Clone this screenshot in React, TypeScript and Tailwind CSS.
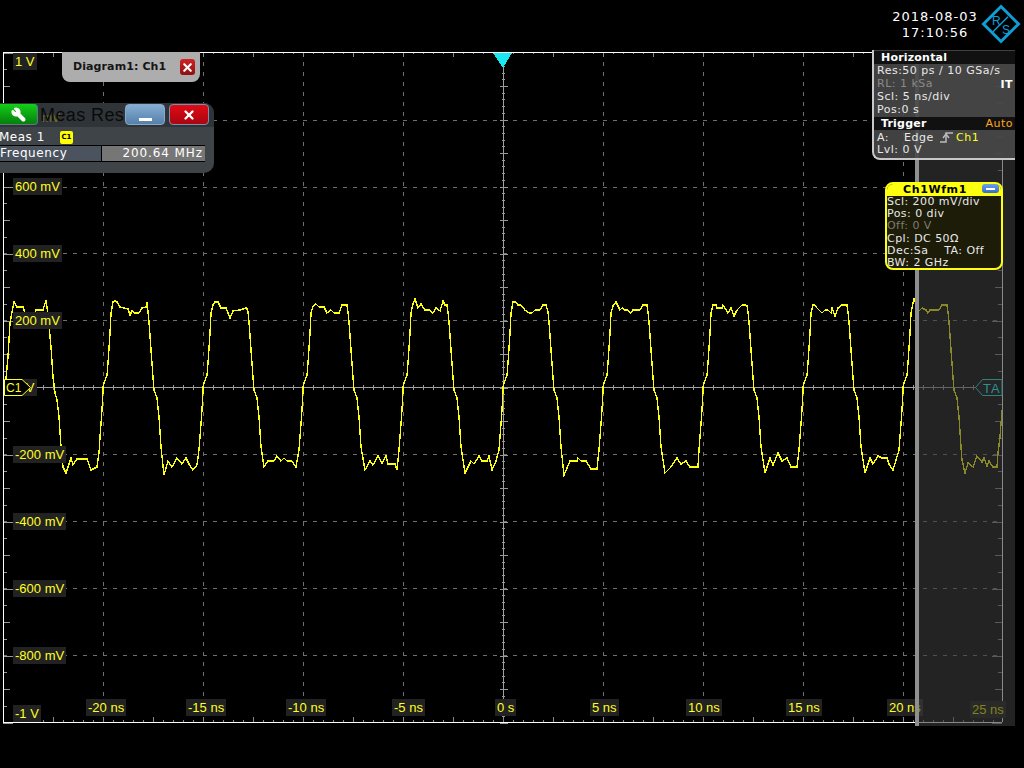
import React from 'react';
import { X, Wrench } from 'lucide-react';

const axisFont = { fontFamily: '"Liberation Sans", Arial, sans-serif' };

const divX = [103.5, 203.5, 303.5, 403.5, 503.5, 603.5, 703.5, 803.5, 903.5];
const divY = [120.5, 187.5, 253.5, 320.5, 454.5, 521.5, 588.5, 655.5];

const yLabels = [
    { text: '600 mV', top: 128 },
    { text: '400 mV', top: 195 },
    { text: '200 mV', top: 262 },
    { text: '0 V', top: 329 },
    { text: '-200 mV', top: 396 },
    { text: '-400 mV', top: 463 },
    { text: '-600 mV', top: 530 },
    { text: '-800 mV', top: 597 },
];

const xLabels = [
    { text: '-20 ns', left: 86 },
    { text: '-15 ns', left: 186 },
    { text: '-10 ns', left: 286 },
    { text: '-5 ns', left: 392 },
    { text: '0 s', left: 495 },
    { text: '5 ns', left: 590 },
    { text: '10 ns', left: 686 },
    { text: '15 ns', left: 786 },
    { text: '20 ns', left: 887 },
];

// one period of the trace, dx from the rising zero crossing, y in page px
const riseEdge = [[0, 387], [1, 383], [4, 375], [5, 363], [7, 333], [8, 313]];
const fallEdge = [[45, 312], [46, 322], [48, 350], [50, 377], [51, 390], [54, 398], [56, 417], [58, 447]];
const backEdge = [[97, 437], [99, 410], [100, 390]];

const tops = [
    [[10, 302], [12, 301], [14, 302], [17, 307], [21, 308], [25, 309], [27, 315], [29, 311], [32, 313], [36, 313], [39, 308], [43, 307], [44, 302]],
    [[10, 305], [12, 302], [15, 302], [18, 308], [23, 308], [27, 318], [30, 311], [37, 310], [43, 308], [44, 309]],
    [[10, 306], [11, 305], [13, 304], [16, 307], [21, 307], [24, 313], [28, 310], [31, 313], [36, 313], [39, 305], [44, 305]],
    [[10, 304], [12, 299], [15, 308], [18, 304], [22, 310], [27, 310], [30, 313], [33, 308], [37, 311], [40, 301], [42, 305], [44, 305]],
    [[10, 302], [13, 302], [15, 305], [18, 305], [22, 310], [26, 313], [29, 313], [32, 310], [37, 310], [40, 305], [43, 305]],
    [[10, 306], [13, 302], [17, 310], [19, 308], [22, 310], [25, 310], [28, 313], [30, 310], [37, 310], [40, 305], [44, 305]],
    [[10, 305], [13, 305], [14, 308], [19, 308], [20, 305], [25, 313], [28, 308], [31, 316], [34, 310], [39, 305], [42, 305], [44, 306]],
    [[10, 305], [12, 305], [14, 308], [19, 313], [22, 310], [25, 310], [28, 313], [29, 308], [32, 316], [35, 308], [39, 305], [44, 305]],
    [[10, 303], [11, 299], [14, 307], [16, 311], [19, 308], [23, 310], [25, 313], [27, 310], [36, 310], [39, 305], [44, 305]],
];

const bottoms = [
    [[61, 475], [65, 461], [69, 467], [74, 458], [79, 464], [83, 458], [86, 464], [90, 470], [94, 465], [96, 450]],
    [[61, 467], [65, 461], [71, 461], [74, 456], [78, 461], [81, 458], [84, 461], [89, 461], [93, 467], [96, 450]],
    [[62, 470], [67, 461], [70, 465], [75, 456], [79, 463], [83, 456], [85, 464], [92, 464], [94, 470], [96, 450]],
    [[62, 473], [68, 461], [71, 464], [76, 456], [79, 461], [84, 461], [86, 456], [89, 470], [93, 461], [96, 450]],
    [[61, 475], [67, 461], [74, 461], [75, 458], [78, 461], [83, 461], [88, 469], [94, 469], [96, 450]],
    [[62, 473], [68, 467], [74, 458], [78, 464], [83, 461], [87, 467], [95, 467], [96, 450]],
    [[62, 473], [67, 458], [70, 465], [75, 453], [79, 461], [84, 458], [88, 467], [94, 467], [96, 450]],
    [[62, 473], [67, 458], [70, 464], [75, 456], [79, 458], [84, 458], [86, 464], [90, 470], [96, 450]],
    [[59, 460], [62, 473], [65, 463], [70, 467], [74, 456], [79, 462], [81, 458], [84, 466], [86, 461], [90, 467], [94, 467], [95, 453]],
];

const firstPulse = [
    [4, 385], [6, 378], [8, 357], [10, 323], [12, 312], [14, 302], [17, 307], [23, 307], [25, 313], [35, 313], [36, 310], [43, 310], [46, 300],
    [48, 315], [51, 347], [53, 377], [55, 393], [57, 400], [59, 417], [61, 447], [63, 467], [66, 473], [68, 467], [71, 458], [73, 465], [77, 459],
    [87, 459], [91, 470], [97, 467], [99, 453], [100, 437], [102, 410], [103, 390],
];

const buildTrace = () => {
    const pts = firstPulse.map(([x, y]) => `${x},${y}`);
    tops.forEach((top, i) => {
        const start = 103 + i * 100;
        const cycle = [...riseEdge, ...top, ...fallEdge, ...bottoms[i], ...backEdge];
        cycle.forEach(([dx, y]) => {
            const x = start + dx;
            if (x <= 1002) pts.push(`${x},${y}`);
        });
    });
    return pts.join(' ');
};

const ticks = () => {
    const out: React.ReactNode[] = [];
    for (let i = 0; i <= 99; i++) {
        const x = 3.5 + i * 10;
        const long = i % 5 === 0;
        out.push(<line key={`c${i}`} x1={x} x2={x} y1={385} y2={390} stroke="#999" />);
        out.push(<line key={`t${i}`} x1={x} x2={x} y1={52} y2={long ? 57 : 54} stroke="#888" />);
        out.push(<line key={`b${i}`} x1={x} x2={x} y1={722} y2={long ? 717 : 720} stroke="#888" />);
    }
    for (let i = 0; i <= 40; i++) {
        const y = Math.round(52.5 + i * 16.75) + 0.5;
        const len = i % 4 === 0 ? 10 : i % 2 === 0 ? 7 : 4;
        out.push(<line key={`l${i}`} x1={3} x2={3 + len} y1={y} y2={y} stroke="#999" />);
        out.push(<line key={`r${i}`} x1={1002} x2={1002 - len} y1={y} y2={y} stroke="#888" />);
    }
    for (let i = 0; i <= 100; i++) {
        const y = Math.round(52.5 + i * 6.7) + 0.5;
        const w = i % 5 === 0 ? 4 : 1.5;
        out.push(<line key={`m${i}`} x1={503.5 - w} x2={503.5 + w} y1={y} y2={y} stroke="#999" />);
    }
    return out;
};

const AxisLabel = ({ text, className = '', style }: { text: string; className?: string; style?: React.CSSProperties }) => (
    <div className={`absolute h-[17px] px-[2px] bg-[#222] text-[#ffff20] text-[13px] leading-[17px] whitespace-nowrap ${className}`} style={{ ...axisFont, ...style }}>
        {text}
    </div>
);

const Logo = () => (
    <svg width="42" height="42" viewBox="0 0 42 42" className="block">
        <path d="M21 3.5 L38.5 21 L21 38.5 L3.5 21 Z" fill="none" stroke="#0e9ed8" strokeWidth="3" />
        <line x1="28" y1="13.7" x2="13" y2="28.7" stroke="#0e9ed8" strokeWidth="1.5" />
        <text x="12" y="21.5" fontSize="12" fill="#0e9ed8" fontFamily="Liberation Sans, sans-serif">R</text>
        <text x="22" y="30.5" fontSize="12" fill="#0e9ed8" fontFamily="Liberation Sans, sans-serif">S</text>
    </svg>
);

const InfoRow = ({ children, dim, className = '' }: { children: React.ReactNode; dim?: boolean; className?: string }) => (
    <div className={`h-[13px] leading-[13px] whitespace-pre ${dim ? 'text-[#8a8a8a]' : 'text-[#e8e8e8]'} ${className}`}>{children}</div>
);

const ChRow = ({ children, dim }: { children: React.ReactNode; dim?: boolean }) => (
    <div className={`h-[12.2px] leading-[12px] whitespace-pre ${dim ? 'text-[#7c7c70]' : 'text-[#e8e8e8]'}`}>{children}</div>
);

const App: React.FC = () => {
    const trace = buildTrace();

    return (
        <div className="w-[1024px] h-[768px] bg-black flex flex-col overflow-hidden" style={{ fontFamily: '"DejaVu Sans", Verdana, sans-serif' }}>
            <header className="h-[50px] flex justify-end items-start pr-[2px] pt-[3px] shrink-0">
                <div className="text-white text-[13px] leading-[16px] tracking-[1px] text-center mt-[6px] mr-0 w-[90px]">
                    <div>2018-08-03</div>
                    <div>17:10:56</div>
                </div>
                <Logo />
            </header>

            <main className="relative flex-1">
                <svg width="1024" height="718" viewBox="0 50 1024 718" className="absolute inset-0 block" shapeRendering="crispEdges">
                    {divX.map((x) => (
                        <line key={x} x1={x} x2={x} y1={52} y2={722} stroke="#707070" strokeDasharray="4 6" />
                    ))}
                    {divY.map((y) => (
                        <line key={y} x1={3} x2={1002} y1={y} y2={y} stroke="#707070" strokeDasharray="4 6" />
                    ))}
                    <line x1={3} x2={1002} y1={387.5} y2={387.5} stroke="#a0a0a0" />
                    <line x1={503.5} x2={503.5} y1={52} y2={722} stroke="#a0a0a0" />
                    {ticks()}
                    <polyline points={trace} fill="none" stroke="#ffff10" strokeWidth="1.4" />
                    <line x1={3.5} x2={3.5} y1={52} y2={722} stroke="#fff" />
                    <line x1={3} x2={874} y1={52.5} y2={52.5} stroke="#fff" />
                    <line x1={3} x2={1002} y1={722.5} y2={722.5} stroke="#fff" />
                    <line x1={1002.5} x2={1002.5} y1={160} y2={722} stroke="#fff" />
                    <path d="M493 53 H512 L503 68 Z" fill="#1ae8f0" />
                </svg>

                <AxisLabel text="1 V" className="left-[13px] top-[3px]" />
                {yLabels.map((l) => (
                    <AxisLabel key={l.text} text={l.text} className="left-[13px]" style={{ top: l.top }} />
                ))}
                <AxisLabel text="-1 V" className="left-[13px] top-[655px]" />
                {xLabels.map((l) => (
                    <AxisLabel key={l.text} text={l.text} className="top-[649px]" style={{ left: l.left }} />
                ))}

                {/* channel marker on the zero line */}
                <svg width="30" height="18" viewBox="0 0 30 18" className="absolute left-[4px] top-[329px]">
                    <path d="M0.5 0.5 H18 L26.5 8.5 L18 16.5 H0.5 Z" fill="#000" stroke="#ffff20" />
                    <text x="2" y="13" fontSize="12" fill="#ffff20" fontFamily="Liberation Sans, sans-serif">C1</text>
                </svg>

                {/* dimmed zone behind the reference cursor */}
                <div className="absolute left-[915px] top-[2px] w-[100px] h-[674px] bg-[#3a3a3a]/60 border-l-[4px] border-[#8f8f8f]">
                    <svg width="28" height="18" viewBox="0 0 28 18" className="absolute left-[56px] top-[327px]">
                        <path d="M0.5 8.5 L7.5 0.5 H27 V16.5 H7.5 Z" fill="#262626" stroke="#2f8080" />
                        <text x="8" y="13.5" fontSize="13" letterSpacing="1" fill="#2f8f8f" fontFamily="Liberation Sans, sans-serif">TA</text>
                    </svg>
                    <div className="absolute left-[51px] top-[649px] h-[17px] px-[2px] bg-[#2a2a2a] text-[#84841c] text-[13px] leading-[17px] whitespace-nowrap" style={axisFont}>25 ns</div>
                </div>

                {/* tab of the diagram */}
                <div className="absolute left-[62px] top-[2px] w-[138px] h-[30px] bg-[#adadad] rounded-b-[8px] flex items-center pl-[11px] pr-[5px] justify-between">
                    <span className="text-[11px] font-bold tracking-[0.1px] text-[#151515]">Diagram1: Ch1</span>
                    <span className="w-[15px] h-[16px] rounded-[3px] bg-linear-to-b from-[#d02424] to-[#8e1010] flex items-center justify-center">
                        <X size={13} strokeWidth={4} className="text-white" />
                    </span>
                </div>

                {/* measurement result dock */}
                <section className="absolute left-0 top-[53px] w-[214px] h-[70px] bg-[#3e4448] rounded-r-[10px] overflow-hidden">
                    <div className="h-[24px] bg-[#2f3438] relative">
                        <span className="absolute left-[42px] top-[8px] text-[12px] text-[#77772a] leading-[14px]" style={axisFont}>mV</span>
                        <span className="absolute left-[40px] top-[1px] text-[18px] leading-[22px] text-[#0a0a0a] tracking-[0.4px] whitespace-nowrap" style={axisFont}>Meas Res</span>
                        <button className="absolute left-0 top-[1px] w-[38px] h-[21px] rounded-r-[4px] bg-linear-to-b from-[#14d018] to-[#067f0c] flex items-center justify-center border-r border-b border-[#5a7a88]">
                            <Wrench size={15} strokeWidth={2.5} fill="currentColor" className="text-white -scale-x-100" />
                        </button>
                        <button className="absolute left-[125px] top-[1px] w-[40px] h-[21px] rounded-[4px] bg-linear-to-b from-[#86aed4] to-[#5580aa] border border-[#8aa8c8] flex items-end justify-center pb-[3px]">
                            <span className="block w-[13px] h-[3px] bg-white" />
                        </button>
                        <button className="absolute left-[169px] top-[1px] w-[40px] h-[21px] rounded-[4px] bg-linear-to-b from-[#e00a14] to-[#a80610] border border-[#7b8fb0] flex items-center justify-center">
                            <X size={14} strokeWidth={4} className="text-white" />
                        </button>
                    </div>
                    <div className="h-[18px] pt-[2px] flex items-center -ml-[1px] text-white text-[12px] tracking-[0.5px]">
                        <span className="w-[61px]">Meas 1</span>
                        <span className="w-[13px] h-[13px] bg-[#ffff00] rounded-[2px] text-black text-[7px] font-bold leading-[13px] text-center tracking-normal">C1</span>
                    </div>
                    <div className="h-[17px] w-[205px] flex border-y border-black text-white text-[12px] leading-[15px] tracking-[0.6px]">
                        <div className="w-[102px] bg-[#4b535e] border-r border-black whitespace-nowrap">Frequency</div>
                        <div className="flex-1 bg-[#767676] text-right pr-[2px] tracking-[0.9px]">200.64 MHz</div>
                    </div>
                </section>

                {/* horizontal and trigger setup */}
                <aside className="absolute left-[872px] top-0 w-[143px] h-[110px] bg-[#484848]/90 border-l-2 border-b-2 border-[#c8c8c8] rounded-bl-[8px] text-[11px] tracking-[0.5px] overflow-hidden">
                    <div className="h-[13px] bg-[#111] text-white font-bold pl-[7px] leading-[14px] mt-[1px] tracking-[0.2px]">Horizontal</div>
                    <div className="relative pl-[3px]">
                        <InfoRow>Res:50 ps / 10 GSa/s</InfoRow>
                        <InfoRow dim>RL: 1 kSa</InfoRow>
                        <InfoRow>Scl: 5 ns/div</InfoRow>
                        <InfoRow>Pos:0 s</InfoRow>
                        <span className="absolute right-[2px] top-[14px] text-white font-bold leading-[13px]">IT</span>
                    </div>
                    <div className="h-[13px] mt-[1px] bg-[#111] flex justify-between pl-[7px] pr-[2px] leading-[13px]">
                        <span className="text-white font-bold tracking-[0.2px]">Trigger</span>
                        <span className="text-[#ffa81e]">Auto</span>
                    </div>
                    <div className="pl-[3px] pt-[1px]">
                        <InfoRow className="flex">
                            <span className="w-[27px]">A:</span>
                            <span className="w-[36px]">Edge</span>
                            <svg width="14" height="13" viewBox="0 0 14 13" className="mr-[2px]">
                                <path d="M0 11 H6 V2 H13" fill="none" stroke="#bbb" strokeWidth="1.5" />
                                <path d="M3 7 L6 3 L9 7" fill="none" stroke="#bbb" strokeWidth="1.5" />
                            </svg>
                            <span className="text-[#ffff20]">Ch1</span>
                        </InfoRow>
                        <InfoRow className="mt-[-1px]">Lvl: 0 V</InfoRow>
                    </div>
                </aside>

                {/* channel settings */}
                <aside className="absolute left-[885px] top-[132px] w-[118px] h-[88px] bg-[#1c1c08] border-2 border-[#ffff10] rounded-[8px] overflow-hidden text-[11px] tracking-[0.45px]">
                    <div className="relative h-[12px] bg-[#ffff10] text-black font-bold text-center leading-[11px] pr-[18px] tracking-[0.6px]">
                        Ch1Wfm1
                        <span className="absolute right-[2px] top-0 w-[17px] h-[9px] bg-linear-to-b from-[#6f9fe8] to-[#2f6fd0] rounded-[3px] flex items-center justify-center">
                            <span className="w-[9px] h-[2px] bg-white" />
                        </span>
                    </div>
                    <div className="pl-0">
                        <ChRow>Scl: 200 mV/div</ChRow>
                        <ChRow>Pos: 0 div</ChRow>
                        <ChRow dim>Off: 0 V</ChRow>
                        <ChRow>Cpl: DC 50Ω</ChRow>
                        <ChRow>Dec:Sa    TA: Off</ChRow>
                        <ChRow>BW: 2 GHz</ChRow>
                    </div>
                </aside>
            </main>
        </div>
    );
};

export default App;
